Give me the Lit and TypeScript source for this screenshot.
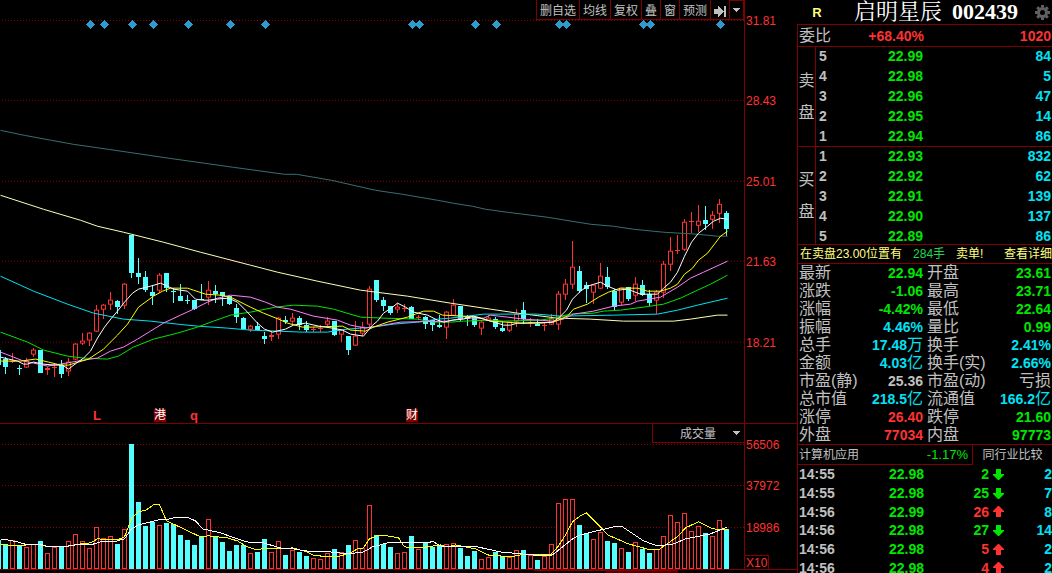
import { LitElement, html, svg, css } from "lit";
import { customElement, property } from "lit/decorators.js";

type Row = [string, number, number, number, number, number];

const STEP = 7;
const FIRST_X = -2;

// direction, body top, body bottom, wick top, wick bottom, volume bar top
const CANDLES: Row[] = [
  ["d", 350, 365, 350, 365, 540], ["d", 359, 367, 357, 374, 544], ["u", 361, 362, 353, 363, 540],
  ["d", 368, 369, 365, 375, 545], ["u", 361, 368, 358, 368, 547], ["u", 350, 355, 348, 357, 544],
  ["d", 350, 373, 350, 373, 541], ["u", 368, 370, 367, 375, 553], ["u", 367, 368, 364, 377, 547],
  ["d", 365, 374, 360, 378, 546], ["u", 362, 372, 358, 376, 541], ["u", 344, 360, 343, 360, 534],
  ["u", 341, 344, 333, 345, 541], ["u", 333, 341, 332, 346, 548], ["u", 310, 332, 305, 332, 527],
  ["u", 305, 310, 304, 319, 538], ["u", 300, 305, 292, 310, 536], ["d", 301, 307, 300, 314, 544],
  ["u", 284, 306, 283, 309, 529], ["d", 235, 273, 235, 278, 444], ["d", 273, 277, 258, 284, 502],
  ["d", 277, 290, 271, 292, 526], ["d", 292, 296, 285, 305, 522], ["u", 275, 291, 273, 293, 525],
  ["d", 273, 288, 273, 292, 523], ["d", 291, 292, 288, 303, 524], ["d", 296, 301, 284, 301, 535],
  ["d", 300, 301, 295, 304, 540], ["d", 300, 309, 300, 310, 545], ["d", 299, 300, 284, 300, 537],
  ["u", 290, 298, 281, 305, 519], ["d", 291, 294, 285, 303, 537], ["d", 292, 296, 292, 306, 542],
  ["d", 296, 304, 296, 305, 551], ["d", 308, 317, 304, 323, 545], ["d", 318, 329, 317, 329, 545],
  ["u", 326, 330, 325, 332, 553], ["d", 326, 330, 322, 330, 552], ["d", 336, 339, 332, 344, 539],
  ["u", 335, 337, 332, 341, 552], ["u", 318, 335, 317, 339, 541], ["d", 320, 322, 316, 324, 555],
  ["u", 318, 322, 313, 325, 550], ["d", 318, 325, 316, 330, 552], ["d", 325, 330, 321, 332, 556],
  ["u", 329, 330, 327, 332, 558], ["u", 328, 329, 325, 332, 559], ["u", 321, 325, 317, 326, 553],
  ["d", 321, 335, 321, 336, 549], ["u", 330, 335, 330, 342, 552], ["d", 336, 350, 336, 355, 545],
  ["u", 336, 346, 321, 346, 540], ["u", 327, 334, 322, 336, 548], ["u", 289, 325, 286, 327, 505],
  ["d", 280, 300, 280, 302, 535], ["d", 300, 306, 297, 311, 544], ["d", 306, 313, 306, 315, 547],
  ["u", 307, 310, 303, 313, 553], ["u", 308, 309, 304, 312, 552], ["d", 307, 319, 306, 319, 536],
  ["u", 317, 318, 315, 320, 549], ["d", 317, 324, 316, 329, 543], ["d", 320, 325, 320, 331, 547],
  ["d", 325, 327, 315, 328, 545], ["u", 312, 328, 311, 339, 544], ["u", 305, 316, 299, 316, 543],
  ["d", 306, 319, 306, 321, 548], ["d", 316, 319, 315, 326, 556], ["d", 317, 325, 317, 327, 551],
  ["u", 322, 329, 320, 335, 559], ["u", 318, 321, 315, 321, 557], ["d", 319, 327, 317, 329, 552],
  ["d", 328, 331, 321, 332, 556], ["u", 322, 331, 322, 332, 557], ["u", 314, 322, 309, 327, 550],
  ["d", 310, 319, 302, 324, 550], ["u", 322, 323, 318, 327, 555], ["d", 324, 326, 319, 326, 560],
  ["u", 325, 326, 322, 331, 556], ["u", 319, 325, 314, 325, 544], ["u", 294, 325, 291, 330, 503],
  ["u", 284, 295, 279, 300, 499], ["u", 267, 285, 241, 289, 499], ["d", 271, 291, 266, 293, 525],
  ["d", 285, 289, 282, 303, 533], ["u", 285, 293, 285, 304, 539], ["u", 276, 289, 263, 289, 532],
  ["d", 277, 287, 267, 289, 541], ["d", 291, 307, 289, 310, 543], ["u", 288, 303, 288, 305, 548],
  ["d", 287, 299, 287, 301, 552], ["u", 284, 296, 277, 301, 542], ["d", 285, 295, 280, 296, 549],
  ["d", 294, 303, 290, 306, 553], ["u", 292, 301, 290, 314, 549], ["u", 264, 293, 261, 298, 536],
  ["u", 251, 265, 237, 271, 515], ["u", 250, 251, 235, 254, 522], ["u", 222, 250, 219, 251, 513],
  ["u", 221, 222, 212, 233, 531], ["u", 221, 226, 205, 232, 526], ["d", 220, 224, 206, 230, 533],
  ["u", 215, 220, 211, 229, 536], ["u", 204, 214, 199, 223, 520], ["d", 213, 229, 211, 236, 529],
];

const PRICE_LINES: [string, string][] = [
  ["#3a6e70", "0,130 24,135 51,140 73,144 108,149 169,158 233,167 284,174 296,174 331,180 375,190 402,194 437,200 453,203 472,206 485,209 507,212 547,217 590,224 613,226 633,229 663,232 697,234 717,236 727,236"],
  ["#ffffb4", "0,195 43,209 80,220 97,226 123,232 163,242 200,252 250,265 277,272 317,281 360,290 407,296 450,303 490,309 517,313 557,318 590,319 623,321 673,321 690,319 717,315 727,315"],
  ["#02e2f4", "0,276 33,291 67,304 93,313 123,319 150,321 177,324 197,326 227,328 250,330 302,332 327,332 347,329 372,327 393,324 417,322 437,319 450,318 483,314 537,314 560,316 613,315 657,314 677,310 697,305 727,298"],
  ["#00e600", "0,332 27,342 43,350 67,356 83,358 107,359 118,356 133,347 153,339 177,333 197,327 213,321 230,315 250,312 275,307 293,305 317,306 333,309 360,317 383,318 417,319 432,322 450,322 463,321 490,320 503,321 540,320 553,318 570,314 593,313 603,311 620,310 643,307 663,304 680,298 697,290 710,284 727,275"],
  ["#ff80ff", "0,352 13,357 23,361 33,363 47,366 60,364 83,360 97,358 110,351 123,347 137,339 150,331 163,323 180,315 193,309 207,302 217,298 230,295 250,297 265,302 277,307 290,309 313,316 337,320 350,325 365,328 383,325 400,322 447,321 463,318 483,318 490,315 507,317 523,319 553,321 563,319 573,314 593,311 613,306 630,304 637,301 660,297 677,287 690,278 703,272 727,261"],
  ["#ffff00", "0,361 20,361 35,359 48,362 60,365 68,365 78,362 88,359 103,349 117,335 127,324 138,307 153,296 162,291 170,288 187,288 193,290 205,294 220,295 230,297 250,307 263,313 278,319 287,323 302,327 312,327 342,326 350,330 365,331 373,327 387,322 407,317 415,314 423,311 433,311 442,315 463,316 477,317 490,321 520,323 553,322 567,316 573,309 587,304 598,297 608,292 620,288 637,288 647,291 660,291 670,288 677,284 684,274 692,268 698,260 707,253 720,236 727,231"],
  ["#ffffff", "0,357 8,359 17,361 23,364 27,364 33,362 42,364 55,365 62,365 68,369 76,363 83,358 90,351 97,338 104,327 111,318 117,311 124,302 132,293 138,289 150,286 160,283 167,286 173,289 187,291 195,299 202,300 208,300 215,299 228,298 237,302 245,310 257,323 264,329 272,332 285,329 293,325 305,323 318,326 332,328 342,330 350,334 363,336 372,325 377,321 383,313 392,307 397,303 405,307 413,312 427,315 437,320 443,322 452,320 463,319 473,316 483,319 490,321 497,323 503,325 510,325 517,323 540,323 552,322 558,318 566,310 572,299 580,291 587,286 600,282 607,286 617,290 627,289 640,294 657,294 663,288 670,282 677,272 684,256 691,242 698,233 707,226 713,221 720,218 727,219"],
];

const VOLUME_LINES: [string, string][] = [
  ["#ffff00", "0,543 13,545 27,544 40,544 48,546 63,546 80,543 90,542 97,538 117,539 124,536 131,518 138,511 146,509 153,504 159,504 166,520 181,527 200,536 208,535 227,537 237,540 245,545 250,547 257,549 265,547 270,548 282,548 292,547 307,551 312,554 327,556 340,555 350,552 357,548 363,547 369,538 376,535 387,535 398,537 404,546 420,547 440,544 447,546 455,544 475,548 487,554 500,555 510,556 520,554 550,554 558,545 565,534 572,521 580,515 586,512 600,526 607,534 628,543 650,549 658,549 678,535 685,527 698,521 712,528 727,529"],
  ["#ffffff", "0,539 7,539 17,541 27,544 42,544 48,546 70,545 75,544 90,544 100,541 113,541 124,538 131,528 138,524 158,519 166,519 173,517 188,517 195,520 202,528 220,532 237,538 250,542 263,542 283,548 293,548 312,551 330,551 347,553 363,551 372,546 387,542 407,542 433,541 442,546 477,546 500,551 543,555 552,554 572,538 580,534 613,526 622,526 643,540 657,545 673,543 685,538 710,533 727,526"],
];

const DIAMONDS = [90, 104, 132, 153, 188, 230, 265, 412, 419, 475, 496, 559, 566, 643, 650, 720];

const PRICE_TICKS: [string, number][] = [["31.81", 20], ["28.43", 100], ["25.01", 181], ["21.63", 261], ["18.21", 342]];
const VOLUME_TICKS: [string, number][] = [["56506", 20], ["37972", 61], ["18986", 103]];
const MARKS: [string, number, boolean][] = [["L", 97, false], ["港", 160, true], ["q", 194, false], ["财", 412, true]];

const SELL: [string, string, string][] = [
  ["5", "22.99", "84"], ["4", "22.98", "5"], ["3", "22.96", "47"], ["2", "22.95", "14"], ["1", "22.94", "86"],
];
const BUY: [string, string, string][] = [
  ["1", "22.93", "832"], ["2", "22.92", "62"], ["3", "22.91", "139"], ["4", "22.90", "137"], ["5", "22.89", "86"],
];

// label, number, unit, colour class (twice per row)
const STATS: string[][] = [
  ["最新", "22.94", "", "green", "开盘", "23.61", "", "green"],
  ["涨跌", "-1.06", "", "green", "最高", "23.71", "", "green"],
  ["涨幅", "-4.42%", "", "green", "最低", "22.64", "", "green"],
  ["振幅", "4.46%", "", "cyan", "量比", "0.99", "", "green"],
  ["总手", "17.48", "万", "cyan", "换手", "2.41%", "", "cyan"],
  ["金额", "4.03", "亿", "cyan", "换手(实)", "2.66%", "", "cyan"],
  ["市盈(静)", "25.36", "", "gray", "市盈(动)", "", "亏损", "gray"],
  ["总市值", "218.5", "亿", "cyan", "流通值", "166.2", "亿", "cyan"],
  ["涨停", "26.40", "", "red", "跌停", "21.60", "", "green"],
  ["外盘", "77034", "", "red", "内盘", "97773", "", "green"],
];

const TICKS: [string, string, string, string, string][] = [
  ["14:55", "22.98", "2", "green", "2"],
  ["14:55", "22.98", "25", "green", "7"],
  ["14:56", "22.99", "26", "red", "8"],
  ["14:56", "22.98", "27", "green", "14"],
  ["14:56", "22.98", "5", "red", "2"],
  ["14:56", "22.98", "4", "red", "2"],
];

const base = css`
  * { box-sizing: border-box; }
  button, select {
    margin: 0; padding: 0; border: 0; border-radius: 0; background: #000;
    color: #c0c0c0; font: inherit; cursor: pointer;
  }
  svg { display: block; }
  .green { color: #00e600; }
  .red { color: #ff3232; }
  .cyan { color: #02e2f4; }
  .gray { color: #c0c0c0; }
`;

const gridLine = (y: number) =>
  svg`<line x1="2" x2="744" y1=${y + 0.5} y2=${y + 0.5} stroke="#900000" stroke-dasharray="1 2"></line>`;

const polyline = ([color, points]: [string, string]) =>
  svg`<polyline points=${points} transform="translate(0.5 0.5)" fill="none" stroke=${color}></polyline>`;

@customElement("chart-panel")
export class ChartPanel extends LitElement {
  static styles = [base, css`
    :host { display: flex; flex-direction: column; min-width: 0; }
    .pane { display: grid; grid-template-columns: minmax(0, 1fr) 53px; border-bottom: 1px solid #800000; min-height: 0; }
    .price { flex: 424 1 0; }
    .volume { flex: 146 1 0; }
    .plot { position: relative; min-width: 0; min-height: 0; overflow: hidden; }
    .plot > .canvas { width: 100%; height: 100%; position: absolute; inset: 0; }
    .axis { position: relative; border-left: 1px solid #800000; color: #ff3232; }
    .tick { position: absolute; left: 1px; line-height: 14px; margin-top: -6px; }
    .unit { position: absolute; left: 0; bottom: 0; height: 14px; line-height: 14px; padding: 0 1px; border: solid #800000; border-width: 1px 1px 0 0; }
    .toolbar { position: absolute; top: 0; right: 0; display: flex; height: 20px; border-bottom: 1px solid #800000; }
    .toolbar button { height: 19px; line-height: 16px; padding: 3px 3px 0; border-left: 1px solid #800000; white-space: nowrap; }
    .toolbar .next { width: 19px; }
    .toolbar .more { width: 15px; padding-top: 0; border-top: 1px solid #800000; border-right: 1px solid #800000; }
    .mark { position: absolute; bottom: 1px; width: 12px; margin-left: -6px; height: 13px; line-height: 13px; text-align: center; color: #ff3232; font-weight: bold; font-size: 13px; }
    .boxed { background: #800000; color: #fff; font-weight: normal; font-size: 12px; }
    .picker { position: absolute; top: 0; right: 0; width: 92px; height: 19px; border: solid #800000; border-width: 0 0 1px 1px; background: #000; }
    .picker select { appearance: none; width: 100%; height: 18px; padding: 2px 0 0 27px; outline: 0; }
    .picker .caret { position: absolute; right: 4px; top: 7px; pointer-events: none; }
    .strip { display: flex; height: 3px; }
    .before { flex: 534; }
    .range { flex: 72; border-top: 1px solid #800000; }
    .fill { background: #500000; }
    .after { flex: 119; }
  `];

  private candle = ([dir, top, bottom, high, low]: Row, i: number) => {
    const x = FIRST_X + STEP * i;
    if (dir === "d") {
      return svg`<path d="M${x - 2} ${top}h5v${bottom - top}h-5z M${x} ${high}h1v${low - high}h-1z" fill="#54ffff"></path>`;
    }
    const body = bottom - top < 3
      ? svg`<rect x=${x - 2} y=${top} width="5" height=${bottom - top} fill="#ff3232"></rect>`
      : svg`<rect x=${x - 1.5} y=${top + 0.5} width="4" height=${bottom - top - 1} fill="#000" stroke="#ff3232"></rect>`;
    return svg`<rect x=${x} y=${high} width="1" height=${low - high} fill="#ff3232"></rect>${body}`;
  };

  private bar = ([dir, , , , , top]: Row, i: number) => {
    const x = FIRST_X + STEP * i;
    return dir === "d"
      ? svg`<rect x=${x - 2} y=${top} width="5" height=${569 - top} fill="#54ffff"></rect>`
      : svg`<rect x=${x - 1.5} y=${top + 0.5} width="4" height=${568 - top} fill="#000" stroke="#ff3232"></rect>`;
  };

  render() {
    return html`
      <section class="pane price" aria-label="K线">
        <div class="plot">
          <svg class="canvas" viewBox="0 0 744 423" preserveAspectRatio="none" shape-rendering="crispEdges">
            ${PRICE_TICKS.map(([, y]) => gridLine(y))}
            ${CANDLES.map(this.candle)}
            ${PRICE_LINES.map(polyline)}
            ${DIAMONDS.map((x) => svg`<path d="M${x} 20h1v1h1v1h1v1h1v1h1v1h-1v1h-1v1h-1v1h-1v1h-1v-1h-1v-1h-1v-1h-1v-1h-1v-1h1v-1h1v-1h1v-1h1z" fill="#2d9bcd"></path>`)}
          </svg>
          ${MARKS.map(([text, x, boxed]) => html`<span class="mark ${boxed ? "boxed" : ""}" style="left:${(x / 744) * 100}%">${text}</span>`)}
          <nav class="toolbar">
            <button>删自选</button><button>均线</button><button>复权</button><button>叠</button><button>窗</button><button>预测</button>
            <button class="next" aria-label="下一个">
              <svg width="12" height="11" viewBox="0 0 12 11" shape-rendering="crispEdges"><path d="M0 3h4V0h1v1h1v1h1v1h1v1h1v1h1V0h2v11h-2V6H9v1H8v1H7v1H6v1H5v1H4V8H0z" fill="#c0c0c0"></path></svg>
            </button>
            <button class="more" aria-label="更多">
              <svg width="7" height="4" viewBox="0 0 7 4" shape-rendering="crispEdges"><path d="M0 0h7v1H6v1H5v1H4v1H3V3H2V2H1V1H0z" fill="#c0c0c0"></path></svg>
            </button>
          </nav>
        </div>
        <div class="axis">
          ${PRICE_TICKS.map(([text, y]) => html`<span class="tick" style="top:${(y / 423) * 100}%">${text}</span>`)}
        </div>
      </section>
      <section class="pane volume" aria-label="成交量">
        <div class="plot">
          <svg class="canvas" viewBox="0 424 744 145" preserveAspectRatio="none" shape-rendering="crispEdges">
            ${VOLUME_TICKS.map(([, y]) => gridLine(y + 424))}
            ${CANDLES.map(this.bar)}
            ${VOLUME_LINES.map(polyline)}
          </svg>
          <label class="picker">
            <select aria-label="指标"><option>成交量</option></select>
            <svg class="caret" width="7" height="4" viewBox="0 0 7 4" shape-rendering="crispEdges"><path d="M0 0h7v1H6v1H5v1H4v1H3V3H2V2H1V1H0z" fill="#c0c0c0"></path></svg>
          </label>
        </div>
        <div class="axis">
          ${VOLUME_TICKS.map(([text, y]) => html`<span class="tick" style="top:${(y / 145) * 100}%">${text}</span>`)}
          <span class="unit">X10</span>
        </div>
      </section>
      <div class="strip">
        <span class="before"></span><span class="range"></span><span class="range fill"></span><span class="after"></span>
      </div>
    `;
  }
}

@customElement("order-book")
export class OrderBook extends LitElement {
  @property() name = "";
  @property({ attribute: false }) rows: [string, string, string][] = [];

  static styles = [base, css`
    :host { display: flex; font-size: 14px; }
    .side { width: 18px; border-right: 1px solid #800000; display: flex; flex-direction: column; align-items: center; justify-content: center; gap: 12px; font-size: 16px; line-height: 20px; color: #c0c0c0; }
    table { flex: 1; border-collapse: collapse; table-layout: fixed; font-weight: bold; line-height: 18px; }
    td, th { padding: 0; height: 20px; text-align: right; vertical-align: top; }
    .level { width: 20px; text-align: left; padding-left: 3px; color: #c0c0c0; }
    .cost { width: 87px; }
    .qty { padding-right: 1px; }
  `];

  render() {
    return html`
      <div class="side">${[...this.name].map((c) => html`<span>${c}</span>`)}</div>
      <table aria-label=${this.name}>
        ${this.rows.map(([level, cost, qty]) => html`
          <tr><th class="level" scope="row">${level}</th><td class="cost green">${cost}</td><td class="qty cyan">${qty}</td></tr>`)}
      </table>
    `;
  }
}

@customElement("quote-panel")
export class QuotePanel extends LitElement {
  static styles = [base, css`
    :host { display: flex; flex-direction: column; min-width: 0; overflow: hidden; }
    header { display: flex; align-items: center; height: 24px; padding: 0 1px 0 10px; color: #fff; }
    .tag { width: 20px; color: #ffff80; font-size: 13px; font-weight: bold; text-align: center; margin-right: 27px; }
    h1 { flex: 1; display: flex; gap: 10px; margin: 0; font: bold 22px/24px "Liberation Serif", "Noto Serif CJK SC", "Noto Sans CJK SC", serif; white-space: nowrap; }
    .title { font-weight: normal; }
    .body { flex: 1; min-height: 0; border-left: 1px solid #800000; border-top: 1px solid #800000; }
    .num { font-size: 14px; line-height: 14px; font-weight: bold; }
    .label { font-size: 16px; color: #c0c0c0; }
    .ratio { display: grid; grid-template-columns: 125px 1fr; align-items: center; height: 22px; border-bottom: 1px solid #800000; padding: 0 1px; }
    .pair { display: flex; align-items: center; justify-content: space-between; line-height: 22px; }
    .last { text-align: right; }
    order-book { border-bottom: 1px solid #800000; }
    .sell { height: 100px; }
    .buy { height: 98px; }
    .alert { display: flex; gap: 11px; height: 19px; line-height: 18px; padding: 0 0 0 2px; border-bottom: 1px solid #800000; color: #ffff80; white-space: nowrap; }
    .alert a { color: inherit; text-decoration: none; margin-left: auto; }
    .hand { color: #1ed750; }
    table { width: 100%; border-collapse: collapse; table-layout: fixed; }
    td, th { padding: 0; font-weight: normal; text-align: left; white-space: nowrap; vertical-align: middle; }
    .stats { border-bottom: 1px solid #800000; font-size: 16px; line-height: 16px; }
    .stats tr { height: 18px; }
    .stats th { color: #c0c0c0; padding-left: 1px; }
    .stats td { text-align: right; padding-right: 1px; }
    .c1 { width: 60px; } .c2 { width: 66px; } .c3 { width: 64px; }
    .stats .second { padding-left: 3px; }
    .sector { display: grid; grid-template-columns: 175px 1fr; height: 20px; line-height: 20px; border-bottom: 1px solid #800000; color: #c0c0c0; }
    .industry { display: flex; justify-content: space-between; padding: 0 4px 0 1px; border-right: 1px solid #800000; }
    .change { font-size: 13px; }
    .ticks { font-size: 14px; font-weight: bold; line-height: 16px; }
    .ticks tr { height: 19px; }
    .ticks tr:nth-child(3n + 1) { height: 18px; }
    .ticks td { font-weight: bold; text-align: right; }
    .ticks .time { text-align: left; padding-left: 1px; color: #c0c0c0; }
    .t1 { width: 50px; } .t2 { width: 76px; } .t3 { width: 65px; } .t4 { width: 18px; }
    .arrow { margin-left: 4px; }
    .gear { width: 17px; height: 17px; }
  `];

  render() {
    return html`
      <header>
        <span class="tag">R</span>
        <h1><span class="title">启明星辰</span><span>002439</span></h1>
        <button class="gear" aria-label="设置">
          <svg width="17" height="17" viewBox="0 0 17 17">
            <g stroke="#606060" fill="none"><circle cx="8.5" cy="8.5" r="4" stroke-width="3"></circle>
            ${[0, 45, 90, 135].map((a) => svg`<path d="M8.5 1v2.5M8.5 13.5V16" stroke-width="3" transform="rotate(${a} 8.5 8.5)"></path>`)}</g>
          </svg>
        </button>
      </header>
      <div class="body">
        <div class="ratio">
          <span class="pair"><span class="label">委比</span><span class="num red">+68.40%</span></span>
          <span class="num red last">1020</span>
        </div>
        <order-book class="sell" name="卖盘" .rows=${SELL}></order-book>
        <order-book class="buy" name="买盘" .rows=${BUY}></order-book>
        <div class="alert"><span>在卖盘23.00位置有</span><span class="hand">284手</span><span>卖单!</span><a href="#detail">查看详细</a></div>
        <table class="stats">
          <colgroup><col class="c1"><col class="c2"><col class="c3"><col></colgroup>
          ${STATS.map(([l1, n1, u1, k1, l2, n2, u2, k2]) => html`<tr>
            <th scope="row">${l1}</th><td class=${k1}><span class="num">${n1}</span>${u1}</td>
            <th scope="row" class="second">${l2}</th><td class=${k2}><span class="num">${n2}</span>${u2}</td>
          </tr>`)}
        </table>
        <div class="sector">
          <span class="industry"><span>计算机应用</span><span class="change green">-1.17%</span></span>
          <button>同行业比较</button>
        </div>
        <table class="ticks">
          <colgroup><col class="t1"><col class="t2"><col class="t3"><col class="t4"><col></colgroup>
          ${TICKS.map(([time, cost, qty, dir, count]) => html`<tr>
            <td class="time">${time}</td><td class="green">${cost}</td><td class=${dir}>${qty}</td>
            <td class=${dir}><svg class="arrow" width="11" height="11" viewBox="0 0 11 11"><path d=${dir === "green" ? "M3 0h5v5h3v1L6 11H5L0 6V5h3z" : "M3 11h5V6h3V5L6 0H5L0 5v1h3z"} fill="currentColor"></path></svg></td>
            <td class="cyan">${count}</td>
          </tr>`)}
        </table>
      </div>
    `;
  }
}

@customElement("app-root")
export class AppRoot extends LitElement {
  static styles = [base, css`
    :host {
      display: grid; grid-template-columns: minmax(0, 1fr) 255px; height: 100vh; overflow: hidden;
      background: #000; color: #c0c0c0;
      font-family: "Liberation Sans", "Noto Sans CJK SC", sans-serif; font-size: 12px;
    }
  `];

  render() {
    return html`<chart-panel></chart-panel><quote-panel></quote-panel>`;
  }
}
